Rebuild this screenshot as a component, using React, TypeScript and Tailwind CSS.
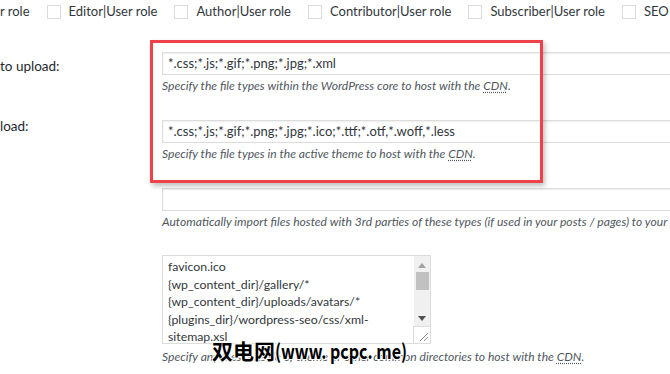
// Settings page fragment: CDN file-type options with a highlight box drawn over two rows.
import type { ReactNode } from "react";

const roles = ["Editor|User role", "Author|User role", "Contributor|User role", "Subscriber|User role", "SEO M"];

const paths = [
  "favicon.ico",
  "{wp_content_dir}/gallery/*",
  "{wp_content_dir}/uploads/avatars/*",
  "{plugins_dir}/wordpress-seo/css/xml-",
  "sitemap.xsl",
];

export default function App() {
  return (
    <div className="relative h-[374px] w-[670px] overflow-hidden bg-white font-['Lato','Noto_Sans_CJK_SC',sans-serif] text-[13px] text-[#32373c]">
      <div className="flex h-[24px] items-center whitespace-nowrap">
        <span>r role</span>
        {roles.map((r) => (
          <span key={r} className="ml-[17px] flex items-center">
            <span className="h-[14px] w-[14px] border border-[#dcdcdc] bg-white" />
            <span className="ml-[8px]">{r}</span>
          </span>
        ))}
      </div>

      <div className="mt-[28px]">
        <Row label="to upload:" labelClass="pt-[5px]">
          <TextInput value="*.css;*.js;*.gif;*.png;*.jpg;*.xml" />
          <Desc>
            Specify the file types within the WordPress core to host with the <Abbr>CDN</Abbr>.
          </Desc>
        </Row>
        <Row label="load:" labelClass="-mt-[3px]">
          <TextInput value="*.css;*.js;*.gif;*.png;*.jpg;*.ico;*.ttf;*.otf,*.woff,*.less" />
          <Desc>
            Specify the file types in the active theme to host with the <Abbr>CDN</Abbr>.
          </Desc>
        </Row>
        <Row label="" className="h-[67px]">
          <TextInput value="" />
          <Desc>
            Automatically import files hosted with 3rd parties of these types (if used in your posts / pages) to your
            CDN.
          </Desc>
        </Row>
        <Row label="">
          <div className="relative h-[89px] w-[269px] border border-[#dcdcdc] bg-white">
            <div className="overflow-hidden pl-[5px] pt-[2px] text-[12.3px] leading-[17.5px] text-[#32373c]">
              {paths.map((p) => (
                <div key={p} className="whitespace-nowrap">
                  {p}
                </div>
              ))}
            </div>
            <div className="absolute right-0 top-0 flex h-[71px] w-[16px] flex-col items-center bg-[#f0f0f0]">
              <svg width="8" height="5" viewBox="0 0 8 5" className="mt-[7px]">
                <path d="M0 5 L4 0 L8 5 Z" fill="#a3a3a3" />
              </svg>
              <div className="mt-[4px] h-[18px] w-[13px] bg-[#c1c1c1]" />
              <svg width="8" height="5" viewBox="0 0 8 5" className="mt-[26px]">
                <path d="M0 0 L4 5 L8 0 Z" fill="#505050" />
              </svg>
            </div>
            <div className="absolute bottom-0 right-0 h-[17px] w-[17px] border-l border-t border-[#dcdcdc] bg-white">
              <svg width="10" height="10" viewBox="0 0 10 10" className="absolute bottom-[2px] right-[2px]">
                <path d="M2 10 L10 2 M6 10 L10 6" stroke="#8a8a8a" strokeWidth="1" />
              </svg>
            </div>
          </div>
          <Desc className="mt-[4px]">
            Specify any files outside of theme or other common directories to host with the <Abbr>CDN</Abbr>.
          </Desc>
        </Row>
      </div>

      {/* annotation box */}
      <div className="absolute left-[150px] top-[40px] h-[143px] w-[393px] border-[3px] border-[#ee4148] shadow-[2px_3px_5px_rgba(0,0,0,0.25)]" />

      {/* watermark */}
      <div className="absolute left-[212px] top-[335px] flex items-baseline whitespace-nowrap font-['Noto_Sans_CJK_SC',sans-serif] font-bold leading-[30px] text-black [text-shadow:1px_1px_0_#fff,-1px_-1px_0_#fff,1px_-1px_0_#fff,-1px_1px_0_#fff]">
        <span className="text-[21px]">双电网</span>
        <span className="inline-block origin-left scale-x-[0.8] text-[20px]">(www. pcpc. me)</span>
      </div>
    </div>
  );
}

function Row({
  label,
  labelClass = "",
  className = "h-[68px]",
  children,
}: {
  label: string;
  labelClass?: string;
  className?: string;
  children: ReactNode;
}) {
  return (
    <div className={`grid grid-cols-[162px_1fr] ${className}`}>
      <div className={`text-[13.5px] leading-[18px] text-[#23282d] ${labelClass}`}>{label}</div>
      <div>{children}</div>
    </div>
  );
}

function TextInput({ value }: { value: string }) {
  return (
    <div className="flex h-[23px] w-[560px] items-center border border-[#dcdcdc] bg-white px-[5px] text-[13px] text-[#32373c] shadow-[inset_0_1px_2px_rgba(0,0,0,0.07)]">
      <span className="whitespace-nowrap">{value}</span>
    </div>
  );
}

function Desc({ children, className = "mt-[2px]" }: { children: ReactNode; className?: string }) {
  return <div className={`whitespace-nowrap text-[12.1px] italic leading-[18px] text-[#50575e] ${className}`}>{children}</div>;
}

function Abbr({ children }: { children: ReactNode }) {
  return <span className="underline decoration-dotted underline-offset-2">{children}</span>;
}
